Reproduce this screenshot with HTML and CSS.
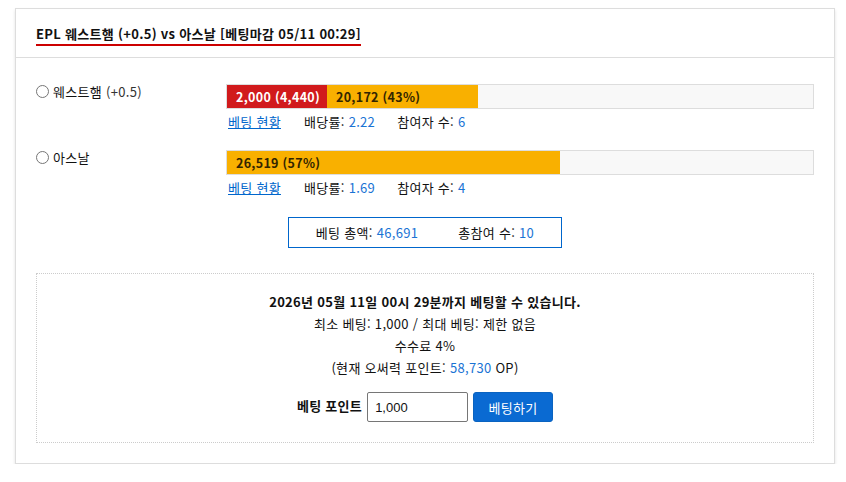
FILE: index.html
```html
<!DOCTYPE html>
<html lang="ko">
<head>
<meta charset="utf-8">
<title>EPL 베팅</title>
<link rel="stylesheet" href="styles.css">
</head>
<body>
<div class="card">
  <div class="head">
    <span class="title">EPL 웨스트햄 (+0.5) vs 아스날 [베팅마감 05/11 00:29]</span>
  </div>
  <div class="body">
    <div class="opt">
      <label class="opt-name"><span class="radio"></span>웨스트햄 <span class="hc">(+0.5)</span></label>
      <div class="opt-main">
        <div class="bar">
          <div class="seg seg-red" style="width:100px">2,000 (4,440)</div>
          <div class="seg seg-orange" style="width:151px">20,172 (43%)</div>
        </div>
        <div class="meta">
          <a href="#" class="link">베팅 현황</a>
          <span class="meta-item">배당률: <span class="num">2.22</span></span>
          <span class="meta-item">참여자 수: <span class="num">6</span></span>
        </div>
      </div>
    </div>
    <div class="opt">
      <label class="opt-name"><span class="radio"></span>아스날</label>
      <div class="opt-main">
        <div class="bar">
          <div class="seg seg-orange" style="width:333px">26,519 (57%)</div>
        </div>
        <div class="meta">
          <a href="#" class="link">베팅 현황</a>
          <span class="meta-item">배당률: <span class="num">1.69</span></span>
          <span class="meta-item">참여자 수: <span class="num">4</span></span>
        </div>
      </div>
    </div>
    <div class="total-wrap">
      <div class="total">
        <span>베팅 총액: <span class="num">46,691</span></span>
        <span>총참여 수: <span class="num">10</span></span>
      </div>
    </div>
    <div class="betbox">
      <p class="line strong">2026년 05월 11일 00시 29분까지 베팅할 수 있습니다.</p>
      <p class="line">최소 베팅: 1,000 / 최대 베팅: 제한 없음</p>
      <p class="line">수수료 4%</p>
      <p class="line">(현재 오써력 포인트: <span class="num">58,730</span> OP)</p>
      <div class="form">
        <span class="form-label">베팅 포인트</span>
        <input class="input" type="text" value="1,000">
        <button class="btn" type="button">베팅하기</button>
      </div>
    </div>
  </div>
</div>
</body>
</html>
```

FILE: styles.css
```css
* { box-sizing: border-box; }
html, body { background: #fff; }
body {
  margin: 0;
  padding: 8px 11px 0 15px;
  font-family: "Noto Sans CJK KR", "Noto Sans", sans-serif;
  font-size: 13px;
  letter-spacing: 0.3px;
  color: #111;
}
.card {
  width: 820px;
  border: 1px solid #ddd;
  background: #fff;
  box-shadow: 0 2px 3px rgba(0,0,0,0.12);
}
.head {
  padding: 15px 20px 11px;
  border-bottom: 1px solid #ddd;
}
.title {
  display: inline-block;
  font-weight: bold;
  font-size: 13px;
  line-height: 16px;
  padding-bottom: 2px;
  border-bottom: 2px solid #cc0000;
}
.body {
  padding: 26px 20px 20px;
}
.opt {
  display: flex;
  margin-bottom: 19px;
}
.opt-name {
  width: 190px;
  flex: none;
  display: flex;
  align-items: flex-start;
  line-height: 16px;
}
.radio {
  width: 13px;
  height: 13px;
  border: 1px solid #767676;
  border-radius: 50%;
  margin: 1px 4px 0 0;
  flex: none;
}
.hc { color: #333; margin-left: 4px; }
.opt-main { flex: 1; }
.bar {
  height: 25px;
  border: 1px solid #ddd;
  background: #f8f8f8;
  display: flex;
}
.seg {
  height: 100%;
  font-weight: bold;
  font-size: 12.5px;
  line-height: 23px;
  padding-left: 9px;
  white-space: nowrap;
}
.seg-red { background: #d11a1c; color: #fff; }
.seg-orange { background: #f9b000; color: #332500; }
.meta {
  margin-top: 4px;
  line-height: 18px;
  display: flex;
}
.link {
  color: #0066cc;
  text-decoration: underline;
  margin-left: 2px;
  margin-right: 23px;
}
.meta-item { margin-right: 22px; }
.num { color: #1a73d4; }
.total-wrap {
  display: flex;
  justify-content: center;
  margin-top: 20px;
}
.total {
  border: 1px solid #0066cc;
  height: 31px;
  padding: 0 27px;
  display: flex;
  align-items: center;
  gap: 40px;
}
.betbox {
  margin-top: 25px;
  border: 1px dotted #ccc;
  padding: 17px 20px 20px;
  text-align: center;
}
.line {
  margin: 0;
  line-height: 22px;
}
.strong { font-weight: bold; }
.form {
  margin-top: 13px;
  display: flex;
  justify-content: center;
  align-items: center;
  gap: 5px;
}
.form-label { font-weight: bold; margin-top: -4px; }
.input {
  width: 101px;
  height: 30px;
  border: 1px solid #767676;
  border-radius: 2px;
  padding: 0 7px;
  font-family: "Liberation Sans", sans-serif;
  font-size: 13px;
  letter-spacing: 0;
  color: #111;
}
.btn {
  width: 80px;
  height: 30px;
  border: 1px solid #0a63c0;
  border-radius: 3px;
  background: #0a6ad2;
  color: #fff;
  font-family: "Noto Sans CJK KR", sans-serif;
  font-size: 13px;
  letter-spacing: 0.3px;
}
```
